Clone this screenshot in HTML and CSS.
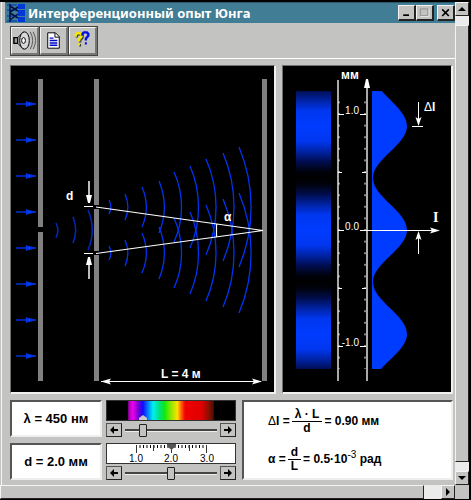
FILE: index.html
```html
<!DOCTYPE html>
<html lang="ru">
<head>
<meta charset="utf-8">
<title>Интерференционный опыт Юнга</title>
<link rel="stylesheet" href="styles.css">
</head>
<body>
<div class="frame">
  <main class="window">
    <header class="titlebar">
      <svg class="app-icon" viewBox="0 0 20 20" aria-hidden="true">
        <path d="M12 1h7v5h-7zM12 7h7v6h-7zM12 14h7v5h-7z" fill="#0038d8"/>
        <path d="M1 2h10M1 7h10M1 13h10M1 18h10" stroke="#0030c0"/>
        <path d="M4 1v18M4 3l8 5M4 9l8-5M4 10l8 5M4 17l8-6" stroke="#001048" stroke-width="1.500" fill="none"/>
      </svg>
      <h1 class="title">Интерференционный опыт Юнга</h1>
      <button class="win-btn" aria-label="Свернуть"><svg viewBox="0 0 18 16"><path d="M5 11h7" stroke="#000" stroke-width="2"/></svg></button>
      <button class="win-btn" aria-label="Развернуть"><svg viewBox="0 0 18 16"><path d="M4 3.500h9v8h-9z" fill="none" stroke="#888"/><path d="M4 12.500h10.500v-9" fill="none" stroke="#eee"/></svg></button>
      <button class="win-btn win-close" aria-label="Закрыть"><svg viewBox="0 0 18 16"><path d="M5 4l8 8M13 4l-8 8" stroke="#000" stroke-width="2"/></svg></button>
    </header>

    <div class="toolbar">
      <button class="tool" aria-label="Звук"><svg viewBox="0 0 26 26"><path d="M2 10h4v6h-4z" fill="#999" stroke="#000" stroke-width="1.500"/><path d="M6 10l6-6v18l-6-6z" fill="#bbb" stroke="#000"/><ellipse cx="13" cy="13" rx="5" ry="9" fill="#d8d8d8" stroke="#000"/><ellipse cx="12" cy="13" rx="2" ry="3" fill="#fff" stroke="#000"/><path d="M19 4q5 9 0 18M22 4q5 9 0 18" fill="none" stroke="#555"/></svg></button>
      <button class="tool" aria-label="Текст"><svg viewBox="0 0 26 26"><path d="M7 5h8l4 4v12h-12z" fill="#fff" stroke="#000"/><path d="M14.500 5v4.500h4.500" fill="none" stroke="#000"/><path d="M9 10.500h4M9 13h8M9 15.500h8M9 18h8" stroke="#0008c8" stroke-width="1.500"/></svg></button>
      <button class="tool" aria-label="Справка"><svg viewBox="0 0 26 26" fill="none" stroke-width="2.500"><path d="M7 10v-2l1.500-1.500h3l1.500 1.500v2l-2.500 3v2M9.500 18h2" stroke="#333"/><path d="M6 9v-2l1.500-1.500h3l1.500 1.500v2l-2.500 3v2M8.500 17h2" stroke="#f4e800"/><path d="M13 8v-2l1.500-1.500h3l1.500 1.500v2l-2.500 3v2M15.500 16h2" stroke="#0010e8"/></svg></button>
    </div>

    <div class="workspace">
      <div class="plots">
        <figure class="panel">
          <svg viewBox="11 66 263 326" role="img" aria-label="Схема опыта">
            <defs>
              <g id="ray"><path d="M16 0h20" stroke="#0030d8" stroke-width="1.500"/><path d="M26-3l2 3-2 3M27-2l8 2-8 2z" stroke="#0030d8" fill="#0040ff"/></g>
              <g id="waves" fill="none" stroke="#0034f0" stroke-width="1.300">
                <path d="M13-7a15 15 0 0 1 0 14"/>
                <path d="M29-13a32 32 0 0 1 0 26"/>
                <path d="M46-20a50 50 0 0 1 0 40"/>
                <path d="M63-26a68 68 0 0 1 0 52"/>
                <path d="M78-35a85 85 0 0 1 0 70"/>
                <path d="M94-41a103 103 0 0 1 0 82"/>
                <path d="M110-48a120 120 0 0 1 0 96"/>
                <path d="M127-54a138 138 0 0 1 0 108"/>
                <path d="M143-60a155 155 0 0 1 0 120"/>
              </g>
            </defs>
            <g fill="#808080">
              <path d="M38 79h5v148h-5zM38 232h5v149h-5z"/>
              <path d="M94 79h5v126h-5zM94 209h5v42h-5zM94 255h5v126h-5z"/>
              <path d="M262 79h5v302h-5z"/>
            </g>
            <use href="#ray" y="104"/><use href="#ray" y="140"/><use href="#ray" y="176"/><use href="#ray" y="212"/>
            <use href="#ray" y="248"/><use href="#ray" y="284"/><use href="#ray" y="320"/><use href="#ray" y="356"/>
            <path d="M56 223a17 17 0 0 1 0 15M73 217a34 34 0 0 1 0 26M88 210a51 51 0 0 1 0 40" fill="none" stroke="#0028c0" stroke-width="1.500"/>
            <use href="#waves" x="96" y="207"/>
            <use href="#waves" x="96" y="253"/>
            <g stroke="#fff" fill="none">
              <path d="M96 207L263 230.500L96 253.500M216.500 224v13" stroke-width="1.200"/>
              <path d="M84 206.500h9M84 253.500h9M101 381.500h160"/>
              <path d="M89 181v22M89 257v22" stroke="#bbb" stroke-width="2"/>
            </g>
            <path d="M86 195h6l-2 8h-2zM86 265h6l-2-8h-2zM101 381.500l10-3-2 3 2 3zM262 381.500l-10-3 2 3-2 3z" fill="#fff"/>
            <g class="label">
              <text x="66" y="200">d</text>
              <text x="224" y="221">α</text>
              <text x="161" y="378">L = 4 м</text>
            </g>
          </svg>
        </figure>

        <figure class="panel">
          <svg viewBox="283 66 168 326" role="img" aria-label="Распределение интенсивности">
            <defs>
              <linearGradient id="fringe" gradientUnits="userSpaceOnUse" x1="0" y1="126" x2="0" y2="178" spreadMethod="reflect">
                <stop offset="0" stop-color="#003cff"/><stop offset=".3" stop-color="#0036ee"/>
                <stop offset=".5" stop-color="#0022a0"/><stop offset=".7" stop-color="#000c48"/>
                <stop offset=".88" stop-color="#00020c"/><stop offset="1" stop-color="#000"/>
              </linearGradient>
              <pattern id="ticks-right" patternUnits="userSpaceOnUse" x="338" y="85" width="4" height="11.600"><path d="M0 5.800h2" stroke="#fff"/></pattern>
              <pattern id="ticks-left" patternUnits="userSpaceOnUse" x="362" y="85" width="4" height="11.600"><path d="M2 5.800h2" stroke="#fff"/></pattern>
              <clipPath id="range"><path d="M370 91h50v278h-50z"/></clipPath>
            </defs>
            <path d="M296 91h35v278h-35z" fill="url(#fringe)"/>
            <path clip-path="url(#range)" fill="#003cff" d="M372 73H373C373 92 407 107 407 126S373 159 373 178S407 211 407 230S373 263 373 282S407 315 407 334S373 367 373 386H372z"/>
            <path d="M338 80v301M367 82v299" stroke="#aaa" stroke-width="2"/>
            <path d="M338 97h4v272h-4z" fill="url(#ticks-right)"/>
            <path d="M362 97h4v272h-4z" fill="url(#ticks-left)"/>
            <g stroke="#fff" fill="none">
              <path d="M338 114.500h6M338 172.500h4M338 230.500h6M338 288.500h4M338 346.500h5"/>
              <path d="M360 114.500h6M362 172.500h4M362 288.500h4M360 346.500h6M360 230.500h76"/>
              <path d="M412 126.500h11M418.500 102v20M418.500 234v20"/>
            </g>
            <path d="M364 88l2-9h2l2 9zM440 230.500l-10-3 2 3-2 3zM418.500 126l-3-9 3 2 3-2zM418.500 231l-3 9 3-2 3 2z" fill="#fff"/>
            <g class="scale">
              <text x="359" y="114">1.0</text>
              <text x="359" y="230">0.0</text>
              <text x="359" y="346">-1.0</text>
            </g>
            <g class="label">
              <text x="341" y="79">мм</text>
              <text x="424" y="111"><tspan class="delta">Δ</tspan>I</text>
              <text class="serif" x="433" y="222">I</text>
            </g>
          </svg>
        </figure>
      </div>

      <div class="controls">
        <div class="inputs">
          <label class="readout" for="wavelength">λ = 450 нм</label>
          <div class="adjust">
            <div class="spectrum"><svg viewBox="0 0 128 19" aria-hidden="true"><path d="M32 19v-2l4-3 4 3v2z" fill="#c8c8c8"/></svg></div>
            <div class="slider-row">
              <button class="step" aria-label="Меньше"><svg viewBox="0 0 14 12"><path d="M3 6l4-4v3h4v2h-4v3z"/></svg></button>
              <input class="slider" id="wavelength" type="range" min="400" max="700" value="450">
              <button class="step" aria-label="Больше"><svg viewBox="0 0 14 12"><path d="M11 6l-4-4v3h-4v2h4v3z"/></svg></button>
            </div>
          </div>
          <label class="readout" for="distance">d = 2.0 мм</label>
          <div class="adjust">
            <div class="ruler">
              <svg viewBox="0 0 128 19" aria-hidden="true">
                <path d="M29 2.500h71" stroke="#000" stroke-dasharray="1 2.500" stroke-width="3"/>
                <path d="M29.500 1v8M46.500 1v6M64.500 1v8M82.500 1v6M99.500 1v8" stroke="#333"/>
                <path d="M60 0h9v2l-4.500 4-4.500-4z" fill="#555"/>
                <g class="ruler-text"><text x="29" y="18">1.0</text><text x="64" y="18">2.0</text><text x="100" y="18">3.0</text></g>
              </svg>
            </div>
            <div class="slider-row">
              <button class="step" aria-label="Меньше"><svg viewBox="0 0 14 12"><path d="M3 6l4-4v3h4v2h-4v3z"/></svg></button>
              <input class="slider" id="distance" type="range" min="1" max="3" step="0.1" value="2">
              <button class="step" aria-label="Больше"><svg viewBox="0 0 14 12"><path d="M11 6l-4-4v3h-4v2h4v3z"/></svg></button>
            </div>
          </div>
        </div>
        <div class="formulas">
          <p class="formula"><span><span class="delta">Δ</span>I =</span><span class="fraction"><span>λ · L</span><span>d</span></span><span>= 0.90 мм</span></p>
          <p class="formula"><span>α =</span><span class="fraction"><span>d</span><span>L</span></span><span>= 0.5·10<sup>-3</sup> рад</span></p>
        </div>
      </div>
    </div>
  </main>

  <div class="scrollbar vertical">
    <button class="arrow" aria-label="Вверх"><svg viewBox="0 0 12 12"><path d="M2 8l4-4 4 4z"/></svg></button>
    <div class="thumb"></div>
    <button class="arrow" aria-label="Вниз"><svg viewBox="0 0 12 12"><path d="M2 4l4 4 4-4z"/></svg></button>
  </div>
  <div class="scrollbar horizontal">
    <div class="thumb"></div>
    <button class="arrow" aria-label="Вправо"><svg viewBox="0 0 12 12"><path d="M4 2l4 4-4 4z"/></svg></button>
  </div>
</div>
</body>
</html>
```
FILE: styles.css
```css
* { box-sizing: border-box; }

body {
  margin: 0;
  background: #000;
  font-family: "Liberation Sans", Arial, sans-serif;
  font-size: 12px;
  color: #000;
}

svg { display: block; width: 100%; height: auto; }

button {
  padding: 0;
  background: #c3c3c1;
  border: 1px solid;
  border-color: #f4f4f4 #222 #222 #f4f4f4;
}

.frame {
  display: grid;
  grid-template-columns: minmax(0, 1fr) 14px;
  grid-template-rows: auto 14px;
  margin-top: 2px;
  margin-right: 2px;
  background: #c3c3c1;
  border-bottom: 1px solid #000;
}

.window {
  margin-left: 1px;
  padding-left: 3px;
  border-left: 1px solid #f4f4f4;
}

/* Title bar */
.titlebar {
  display: flex;
  align-items: center;
  height: 21px;
  background: #417d94;
  border-top: 1px solid #2c5868;
}

.app-icon { width: 20px; margin: 0 2px 0 1px; }

.title {
  flex: 1;
  margin: 0;
  color: #fff;
  font-family: "Noto Sans", "Liberation Sans", sans-serif;
  font-size: 13px;
  line-height: 20px;
  white-space: nowrap;
}

.win-btn { width: 18px; height: 16px; border-width: 1px 2px 2px 1px; }
.win-close { margin-left: 3px; }

/* Toolbar */
.toolbar {
  display: flex;
  gap: 1px;
  padding: 4px 6px 3px;
  border-bottom: 1px solid #fff;
}

.tool {
  width: 28px;
  height: 28px;
  border-width: 1px 2px 2px 1px;
  border-color: #f4f4f4 #777 #777 #f4f4f4;
  outline: 1px solid #444;
}

/* Panels */
.workspace { padding: 6px 2px 5px 5px; }

.plots {
  display: grid;
  grid-template-columns: minmax(0, 266fr) minmax(0, 171fr);
  gap: 6px;
}

.panel {
  margin: 0;
  background: #000;
  border: solid;
  border-width: 1px 2px 2px 1px;
  border-color: #707070 #f0f0f0 #f0f0f0 #707070;
}

.label { fill: #fff; font-size: 12px; font-weight: bold; }
.scale { fill: #fff; font-size: 10px; text-anchor: end; }
.ruler-text { fill: #000; font-size: 10px; text-anchor: middle; }
.serif { font-family: "Liberation Serif", serif; font-size: 14px; }
.delta { font-weight: normal; }

/* Controls */
.controls {
  display: grid;
  grid-template-columns: minmax(0, 226fr) minmax(0, 211fr);
  gap: 6px;
  padding-top: 6px;
}

.inputs {
  display: grid;
  grid-template-columns: minmax(0, 92fr) minmax(0, 130fr);
  gap: 6px 4px;
}

.readout, .formulas {
  background: #fff;
  border: 2px solid;
  border-color: #555 #eee #eee #555;
  font-weight: bold;
}

.readout {
  display: flex;
  align-items: center;
  justify-content: center;
  font-size: 13px;
  white-space: nowrap;
}

.spectrum, .ruler { border: 1px solid #333; }

.spectrum {
  background: linear-gradient(90deg, #000 16%, #a000b0 17%, #f000f0 20%, #8000d0 24%, #1008ff 28%, #0080ff 32%, #00f0f0 36%, #00e080 41%, #10e810 45%, #90e800 50%, #ffe000 55%, #ff6000 58%, #f00000 61%, #e00000 74%, #801000 80%, #501000 83%, #000 84%);
}

.ruler { background: #fff; }

.slider-row {
  display: flex;
  align-items: center;
  gap: 3px;
  padding-top: 2px;
}

.step { width: 16px; height: 14px; border-color: #555 #222 #222 #555; }

.slider {
  appearance: none;
  flex: 1;
  min-width: 0;
  height: 14px;
  margin: 0;
  background: none;
}

.slider::-webkit-slider-runnable-track {
  height: 3px;
  background: #444;
  border-bottom: 1px solid #eee;
}

.slider::-webkit-slider-thumb {
  appearance: none;
  width: 8px;
  height: 13px;
  margin-top: -5px;
  background: #c3c3c1;
  border: 1px solid #222;
  border-radius: 1px;
}

.formulas {
  display: flex;
  flex-direction: column;
  justify-content: space-around;
  padding-left: 24px;
}

.formula {
  display: flex;
  align-items: center;
  gap: 2px;
  margin: 0;
  font-size: 12px;
  line-height: 14px;
  white-space: nowrap;
}

.fraction { display: flex; flex-direction: column; line-height: 13px; text-align: center; }
.fraction span { padding: 0 3px; }
.fraction span + span { border-top: 1px solid #000; }

sup { font-size: 10px; font-weight: normal; line-height: 0; }

/* Scroll bars */
.scrollbar { display: flex; background: #ebebeb; }
.vertical { flex-direction: column; gap: 9px; }
.horizontal { gap: 17px; }

.thumb {
  flex: 1;
  background: #c3c3c1;
  border: 1px solid;
  border-color: #f4f4f4 #222 #222 #f4f4f4;
}

.arrow { width: 14px; height: 14px; }
```
